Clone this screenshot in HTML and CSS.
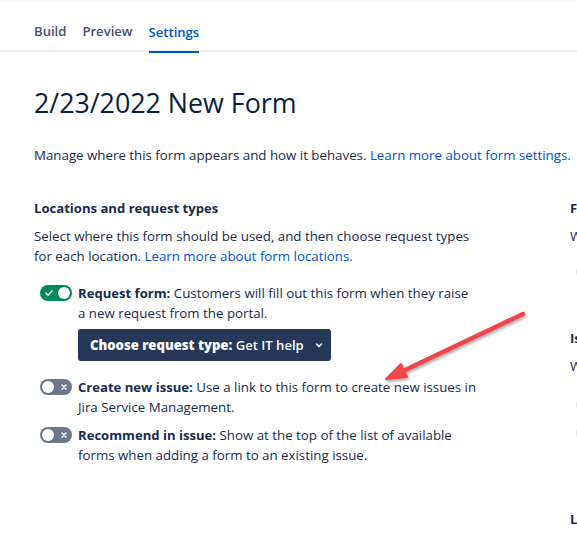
FILE: index.html
```html
<!DOCTYPE html>
<html lang="en">
<head>
<meta charset="utf-8">
<title>Form settings</title>
<link rel="stylesheet" href="styles.css">
</head>
<body>
<div class="page">
  <nav class="tabs">
    <a class="tab">Build</a>
    <a class="tab">Preview</a>
    <a class="tab active">Settings</a>
  </nav>
  <main class="content">
    <h1 class="title">2/23/2022 New Form</h1>
    <p class="intro">Manage where this form appears and how it behaves. <a class="link">Learn more about form settings.</a></p>
    <div class="columns">
      <section class="col-left">
        <h2 class="section-title">Locations and request types</h2>
        <p class="section-desc">Select where this form should be used, and then choose request types for each location. <a class="link">Learn more about form locations.</a></p>
        <div class="option first">
          <span class="toggle on"><span class="knob"></span>
            <svg class="tick" viewBox="0 0 10 10" width="10" height="10"><path d="M2 5.2 L4.1 7.2 L8 3" fill="none" stroke="#fff" stroke-width="1.6" stroke-linecap="round" stroke-linejoin="round"/></svg>
          </span>
          <div class="option-body">
            <p class="option-text"><b>Request form:</b> Customers will fill out this form when they raise a new request from the portal.</p>
            <button class="select-btn"><span><b>Choose request type:</b> Get IT help</span>
              <svg class="chev" viewBox="0 0 10 10" width="10" height="10"><path d="M2.5 4 L5 6.5 L7.5 4" fill="none" stroke="#fff" stroke-width="1.6" stroke-linecap="round" stroke-linejoin="round"/></svg>
            </button>
          </div>
        </div>
        <div class="option second">
          <span class="toggle off"><span class="knob"></span>
            <svg class="cross" viewBox="0 0 10 10" width="10" height="10"><path d="M3 3 L7 7 M7 3 L3 7" fill="none" stroke="#fff" stroke-width="1.5" stroke-linecap="round"/></svg>
          </span>
          <div class="option-body">
            <p class="option-text"><b>Create new issue:</b> Use a link to this form to create new issues in Jira Service Management.</p>
          </div>
        </div>
        <div class="option third">
          <span class="toggle off"><span class="knob"></span>
            <svg class="cross" viewBox="0 0 10 10" width="10" height="10"><path d="M3 3 L7 7 M7 3 L3 7" fill="none" stroke="#fff" stroke-width="1.5" stroke-linecap="round"/></svg>
          </span>
          <div class="option-body">
            <p class="option-text"><b>Recommend in issue:</b> Show at the top of the list of available forms when adding a form to an existing issue.</p>
          </div>
        </div>
      </section>
      <section class="col-right">
        <h2 class="section-title">Form responses</h2>
        <p class="section-desc">When a form is submitted</p>
        <div class="radio-row"><span class="radio"></span>Lock form</div>
        <h2 class="section-title second">Issue fields</h2>
        <p class="section-desc">When linking fields</p>
        <div class="radio-row r2"><span class="radio"></span>Update</div>
        <div class="radio-row r3"><span class="radio"></span>Keep</div>
        <h2 class="section-title third">Language</h2>
      </section>
    </div>
  </main>
  <svg class="arrow" width="577" height="534" viewBox="0 0 577 534">
    <defs>
      <filter id="sh" x="-20%" y="-20%" width="140%" height="140%">
        <feDropShadow dx="1" dy="2" stdDeviation="1.5" flood-color="#000" flood-opacity="0.35"/>
      </filter>
    </defs>
    <g filter="url(#sh)">
      <line x1="523" y1="312" x2="403" y2="369" stroke="#f0454b" stroke-width="4.5" stroke-linecap="round"/>
      <path d="M386 377 L401 362 L407 375 Z" fill="#f0454b" stroke="#f0454b" stroke-width="2" stroke-linejoin="round"/>
    </g>
  </svg>
</div>
</body>
</html>
```
FILE: styles.css
```css
html, body {
  margin: 0;
  padding: 0;
  background: #fff;
}
body {
  font-family: "Open Sans", "Noto Sans", sans-serif;
  color: #172b4d;
  font-size: 13.3px;
  line-height: 20px;
}
.page {
  position: relative;
  width: 577px;
  height: 534px;
  overflow: hidden;
  border-top: 2px solid #f4f5f7;
  box-sizing: border-box;
}
.tabs {
  display: flex;
  gap: 16px;
  padding: 4px 0 0 34px;
  align-items: center;
  border-bottom: 2px solid #ebecf0;
  box-sizing: border-box;
  height: 50px;
}
.tab {
  color: #42526e;
  font-weight: 600;
  font-size: 13.1px;
  height: 44px;
  line-height: 50px;
  box-sizing: border-box;
}
.tab.active {
  color: #0052cc;
  border-bottom: 2px solid #0052cc;
  margin-bottom: -4px;
  height: 46px;
}
.content {
  padding: 0 34px;
}
.title {
  margin: 35px 0 0;
  font-weight: 400;
  font-size: 26.8px;
  line-height: 32px;
  color: #091e42;
}
.intro {
  margin: 26px 0 0;
  white-space: nowrap;
}
.link {
  color: #0052cc;
  font-weight: 500;
}
.columns {
  display: grid;
  grid-template-columns: 446px 200px;
  column-gap: 90px;
  margin-top: 33px;
}
.section-title {
  margin: 0;
  font-size: 13.1px;
  font-weight: 700;
  line-height: 20px;
}
.section-desc {
  margin: 8px 0 0;
}
.option {
  display: flex;
  gap: 6px;
  padding-left: 6px;
}
.option.first { margin-top: 17px; }
.option.second { margin-top: 16px; }
.option.third { margin-top: 8px; }
.toggle {
  position: relative;
  flex: none;
  width: 32px;
  height: 16px;
  border-radius: 8px;
  margin-top: 2px;
}
.toggle.on { background: #00875a; }
.toggle.off { background: #6b778c; }
.knob {
  position: absolute;
  top: 2px;
  width: 12px;
  height: 12px;
  border-radius: 50%;
  background: #fff;
}
.toggle.on .knob { right: 2px; }
.toggle.off .knob { left: 2px; }
.tick { position: absolute; left: 4px; top: 3px; }
.cross { position: absolute; right: 3px; top: 3px; }
.option-body { flex: none; width: 400px; }
.option-text { margin: 0; }
.option-text b { font-weight: 700; font-size: 13.1px; }
.select-btn {
  display: inline-flex;
  align-items: center;
  gap: 10px;
  margin-top: 6px;
  height: 32px;
  padding: 0 7px 0 12px;
  border: none;
  border-radius: 3px;
  background: #253858;
  color: #fff;
  font-family: inherit;
  font-size: 13.1px;
  font-weight: 600;
}
.select-btn b { font-weight: 800; }
.chev { flex: none; }
.col-right .section-title { white-space: nowrap; }
.col-right .section-desc { white-space: nowrap; }
.radio-row {
  display: flex;
  align-items: center;
  gap: 8px;
  margin-top: 16px;
  padding-left: 6px;
  color: #172b4d;
  white-space: nowrap;
}
.radio {
  width: 12px;
  height: 12px;
  border-radius: 50%;
  border: 2px solid #dfe1e6;
  background: #fafbfc;
}
.section-title.second { margin-top: 46px; }
.radio-row.r2 { margin-top: 19px; }
.radio-row.r3 { margin-top: 8px; }
.section-title.third { margin-top: 66px; }
.arrow {
  position: absolute;
  left: 0;
  top: 0;
  pointer-events: none;
}
```
